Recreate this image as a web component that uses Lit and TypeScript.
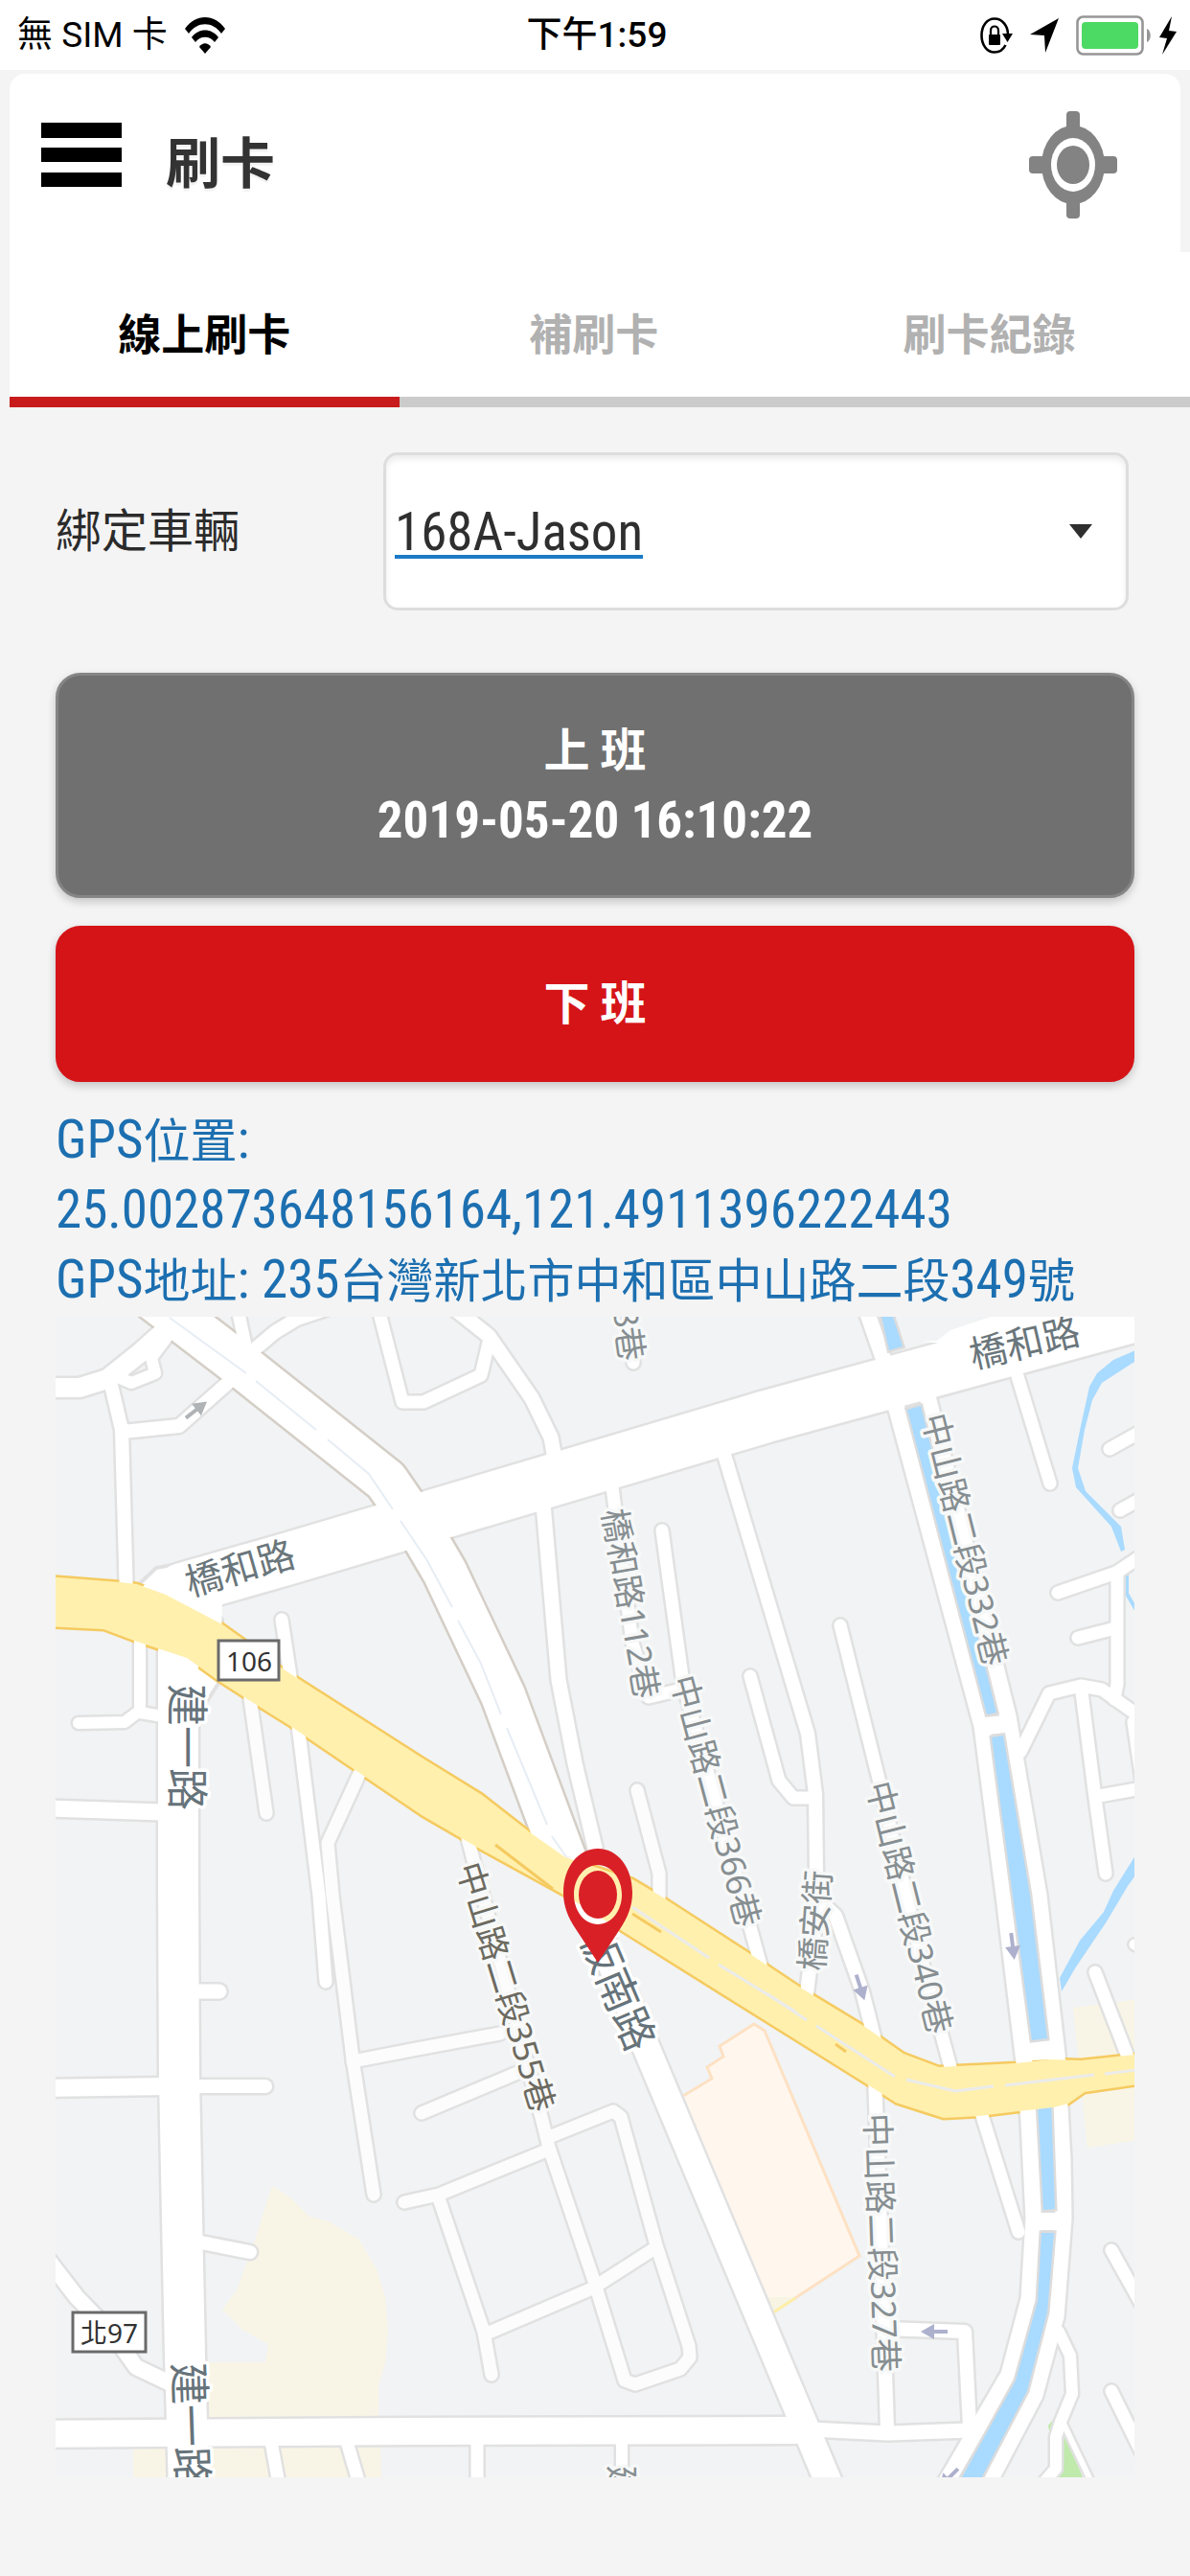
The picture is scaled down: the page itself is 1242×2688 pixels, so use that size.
import { LitElement, html, css, svg } from "lit";
import { customElement, state } from "lit/decorators.js";
import { classMap } from "lit/directives/class-map.js";

type Road = { w: number; p: string; soft?: boolean; dark?: boolean };
type Label = { x: number; y: number; r: number; t: string; k: string };

const ROADS: Road[] = [
  // lanes, north-west
  { w: 20, p: "40,1450 83,1450 112,1441 147,1413 175,1388" },
  { w: 14, p: "115,1443 127,1494 132,1670" },
  { w: 14, p: "128,1496 187,1490 240,1443" },
  { w: 12, p: "123,1439 137,1445 162,1435 158,1419 176,1395" },
  { w: 13, p: "248,1368 257,1410" },
  { w: 14, p: "262,1413 287,1392 310,1378 340,1368" },
  { w: 13, p: "395,1368 420,1465 442,1465 502,1437 510,1403" },
  { w: 15, p: "475,1368 510,1396 555,1461 575,1502 580,1530" },
  { w: 13, p: "655,1366 661,1424" },
  // lanes between the two avenues
  { w: 15, p: "566,1560 583,1755 600,1842 621,1930" },
  { w: 13, p: "638,1546 660,1716 677,1773 711,1765" },
  { w: 13, p: "691,1599 713,1759 760,1930 796,2060" },
  { w: 14, p: "753,1510 843,1811 851,1874 852,1960 852,2000 841,2090" },
  { w: 13, p: "783,1751 813,1860 828,1878 850,1878" },
  { w: 14, p: "855,1985 872,2001 900,2080 914,2135" },
  { w: 14, p: "913,2170 918,2300 926,2537" },
  { w: 13, p: "877,1698 917,1858 965,2060 995,2170" },
  { w: 13, p: "1022,2200 1063,2331" },
  { w: 13, p: "665,1870 688,1957 688,1985", soft: true },
  { w: 13, p: "294,1692 312,1810 333,1980 340,2070" },
  { w: 13, p: "259,1760 278,1894", soft: true },
  { w: 13, p: "381,1840 342,1925 347,1980 368,2150 390,2292", soft: true },
  { w: 13, p: "368,2153 430,2141 522,2124", soft: true },
  { w: 13, p: "440,2207 540,2165", soft: true },
  {
    w: 13,
    p: "488,1920 565,2211 573,2243 620,2382 652,2486 663,2490 710,2474 720,2462 719,2450 685,2345 648,2211 640,2205 573,2232",
    soft: true,
  },
  { w: 13, p: "573,2245 458,2292 422,2300", soft: true },
  { w: 13, p: "458,2296 505,2435 513,2480", soft: true },
  { w: 13, p: "508,2437 618,2390 685,2347", soft: true },
  // west side
  { w: 12, p: "82,1800 130,1799 146,1787 146,1705" },
  { w: 12, p: "146,1789 170,1793" },
  { w: 17, p: "50,1889 170,1893" },
  { w: 15, p: "200,2080 229,2080" },
  { w: 18, p: "50,2181 175,2179" },
  { w: 14, p: "200,2179 277,2179" },
  { w: 14, p: "205,2341 261,2352" },
  { w: 16, p: "50,2360 80,2399 118,2438 142,2472 180,2490" },
  { w: 28, p: "40,2542 430,2539 830,2538" },
  { w: 15, p: "845,2537 927,2541 1012,2538" },
  { w: 13, p: "283,2550 291,2594" },
  { w: 13, p: "362,2550 375,2594" },
  { w: 13, p: "498,2550 498,2594" },
  { w: 12, p: "649,2550 649,2594" },
  { w: 14, p: "925,2432 1007,2435 1012,2535" },
  // east side
  { w: 13, p: "1058,1425 1096,1550" },
  { w: 13, p: "1158,1514 1194,1494" },
  { w: 13, p: "1169,1578 1194,1564" },
  { w: 13, p: "1104,1664 1165,1643 1192,1625" },
  { w: 13, p: "1166,1645 1166,1759 1163,1775" },
  { w: 13, p: "1125,1711 1164,1701" },
  { w: 13, p: "1065,1830 1095,1769 1128,1761 1150,1765 1192,1795" },
  { w: 13, p: "1129,1768 1143,1878 1154,1957" },
  { w: 13, p: "1147,1876 1192,1868" },
  { w: 13, p: "1183,1799 1192,1860" },
  { w: 13, p: "1143,2060 1180,2156" },
  { w: 11, p: "1184,2031 1192,2035" },
  { w: 13, p: "1160,2350 1194,2411" },
  { w: 13, p: "1160,2497 1194,2566" },
  { w: 12, p: "1105,2435 1117,2460 1119,2500 1107,2529 1102,2545 1102,2578 1088,2594" },
  { w: 6, p: "1110,2531 1140,2594" },
  // both banks of the canal and its bridges
  { w: 16, p: "903,1366 922,1420" },
  { w: 17, p: "934,1465 1025,1803 1048,1980 1069,2154 1074,2215 1079,2317 1074,2401 1053,2480 984,2598" },
  { w: 17, p: "967,1455 1052,1793 1084,1980 1103,2145 1109,2256 1110,2317 1102,2419 1080,2501 1031,2594" },
  { w: 18, p: "1028,1803 1050,1801" },
  { w: 20, p: "1072,2142 1100,2141" },
  { w: 18, p: "1083,2320 1105,2320" },
  // avenues
  { w: 42, p: "186,1725 186,1970 187,2170 193,2460 197,2600" },
  { w: 54, p: "190,1660 302,1628 800,1480 1200,1371" },
  { w: 28, p: "600,1960 673,2135 833,2517 868,2600" },
  { w: 46, p: "150,1349 257,1431 403,1547 440,1601 464,1642 525,1771 588,1940", dark: true },
];

const YELLOW_TOP =
  "50,1647 125,1653 143,1655 173,1666 232,1697 253,1712 293,1742 440,1836 503,1875 553,1914 590,1940 660,1963 692,1982 783,2041 837,2077 903,2117 943,2145 980,2159 1060,2155 1097,2151 1128,2152 1194,2145";
const YELLOW_BOTTOM =
  "1194,2176 1132,2185 1115,2197 1100,2201 1063,2205 1022,2210 985,2212 935,2196 910,2180 830,2130 643,2013 590,1980 497,1929 440,1896 303,1803 255,1773 227,1755 195,1732 140,1714 108,1702 50,1699";
const YELLOW = `${YELLOW_TOP} ${YELLOW_BOTTOM}`;

const CANALS = [
  "918,1366 930,1370 942,1407 928,1411",
  "947,1473 961,1469 1040,1789 1030,1791",
  "1035,1815 1047,1813 1075,1980 1093,2129 1077,2131 1057,1980",
  "1083,2195 1097,2195 1101,2307 1089,2308",
  "1087,2332 1100,2332 1093,2415 1072,2497 1019,2598 998,2598 1060,2486 1083,2403",
];

const CREEKS = [
  "1190,1409 1162,1421 1145,1435 1137,1449 1128,1490 1119,1534 1123,1554 1160,1595 1170,1621 1174,1619 1170,1595 1133,1558 1125,1534 1132,1494 1140,1463 1150,1445 1190,1419",
  "1190,1930 1162,1975 1152,1997 1127,2027 1106,2066 1108,2080 1122,2056 1155,2007 1177,1970 1190,1952",
];

const CENTER_BLUE = [
  "177,1377 257,1435",
  "267,1443 330,1494",
  "342,1504 385,1540 410,1577",
  "418,1589 445,1629 472,1679",
  "478,1693 502,1738 523,1791",
  "529,1805 571,1906",
  "576,1918 603,1957",
];

const CENTER_YELLOW = [
  "660,1992 740,2045",
  "750,2052 830,2101",
  "800,2082 842,2110",
  "852,2116 934,2169",
  "946,2172 997,2184 1037,2179",
  "1049,2178 1142,2167",
  "1153,2166 1194,2161",
];

const ORANGE = ["517,1927 577,1973", "660,1999 690,2018", "872,2135 883,2143"];

const ARROWS = [
  { x: 205, y: 1473, r: -38, c: "#b0b3b5" },
  { x: 898, y: 2076, r: 72, c: "#aeb1cd" },
  { x: 1057, y: 2033, r: 83, c: "#aeb1cd" },
  { x: 975, y: 2435, r: 180, c: "#aeb1cd" },
  { x: 990, y: 2588, r: 135, c: "#aeb1cd" },
];

const LABELS: Label[] = [
  { x: 250, y: 1637, r: -16, t: "橋和路", k: "major" },
  { x: 1069, y: 1402, r: -13, t: "橋和路", k: "major" },
  { x: 196, y: 1825, r: 90, t: "建一路", k: "wide" },
  { x: 200, y: 2533, r: 88, t: "建一路", k: "wide" },
  { x: 646, y: 2078, r: 67, t: "板南路", k: "wide" },
  { x: 657, y: 1394, r: 82, t: "8巷", k: "minor" },
  { x: 659, y: 1675, r: 80, t: "橋和路112巷", k: "minor" },
  { x: 748, y: 1881, r: 75, t: "中山路二段366巷", k: "minor" },
  { x: 1008, y: 1608, r: 76, t: "中山路二段332巷", k: "minor" },
  { x: 950, y: 1992, r: 76, t: "中山路二段340巷", k: "minor" },
  { x: 529, y: 2075, r: 73, t: "中山路二段355巷", k: "minor dark" },
  { x: 921, y: 2342, r: 88, t: "中山路二段327巷", k: "minor" },
  { x: 850, y: 2006, r: -86, t: "橋安街", k: "minor" },
  { x: 649, y: 2592, r: 90, t: "建", k: "minor" },
];

@customElement("street-map")
class StreetMap extends LitElement {
  static styles = css`
    :host {
      display: block;
    }
    .map {
      display: block;
      width: 100%;
      height: auto;
      overflow: hidden;
      background: #f1f3f4;
    }
    .line {
      fill: none;
      stroke-linejoin: round;
      stroke-linecap: round;
    }
    .flat {
      fill: none;
      stroke-linejoin: round;
    }
    .label {
      font-family: "Noto Sans", "Noto Sans CJK TC", sans-serif;
      text-anchor: middle;
      dominant-baseline: central;
      paint-order: stroke;
      stroke: #f7f8f8;
      stroke-width: 7px;
      stroke-linejoin: round;
      fill: #868e91;
      font-size: 35px;
    }
    .major {
      font-size: 39px;
      fill: #6a767b;
      stroke: #ffffff;
    }
    .wide {
      font-size: 44px;
      fill: #66737a;
      stroke: #ffffff;
    }
    .dark {
      fill: #6c6a60;
    }
    .shield {
      fill: #ffffff;
      stroke: #6b6a6b;
      stroke-width: 3px;
    }
    .shield-text {
      font: 28px "Noto Sans", "Noto Sans CJK TC", sans-serif;
      text-anchor: middle;
      dominant-baseline: central;
      fill: #333333;
    }
  `;

  render() {
    return html`
      <svg class="map" viewBox="58 1376 1126 1211" role="img" aria-label="地圖">
        <polygon fill="#f9f5e6" points="284,2283 303,2295 323,2315 343,2320 375,2339 393,2370 402,2399 405,2435 402,2468 395,2492 395,2530 210,2530 210,2467 277,2467 280,2448 253,2433 232,2412 247,2392 267,2337" />
        <polygon fill="#f9f5e6" points="139,2550 397,2550 398,2590 139,2590" />
        <polygon fill="#f9f5e6" points="1120,2097 1190,2088 1190,2235 1135,2243" />
        <polygon fill="#fff6ee" stroke="#fde1c3" stroke-width="3" points="708,2192 743,2171 738,2159 755,2148 751,2137 787,2114 798,2121 897,2356 804,2417" />
        <path d="M796,2399 L804,2417 L830,2399 Z" fill="#f7f4e3" />
        <path d="M796,2399 L804,2417 L830,2400" fill="none" stroke="#fdeea9" stroke-width="3" />
        <polygon fill="#bfeaab" points="1108,2530 1131,2590 1104,2590" />
        <polygon fill="#bfeaab" points="1094,2533 1100,2526 1099,2560" />
        ${CREEKS.map((p) => svg`<polygon fill="#a9daff" points=${p} />`)}
        <polyline class="flat" stroke="#a9daff" stroke-width="4" points="1176,1645 1176,1665 1186,1682" />

        ${ROADS.map(
          (r) => svg`<polyline class="line" stroke=${r.dark ? "#d4cec6" : "#e1e1e1"} stroke-width=${r.w + 5} points=${r.p} />`
        )}
        <polygon fill="#ffffff" stroke="#e1e1e1" stroke-width="4" points="143,1657 163,1638 190,1633 232,1692 232,1710" />
        <polygon fill="#ffffff" stroke="#e1e1e1" stroke-width="4" points="200,1735 229,1757 215,1779 210,1799 200,1799" />
        <polygon class="line" stroke="#f5ca60" stroke-width="5" points=${YELLOW} />
        ${ROADS.map(
          (r) => svg`<polyline class="line" stroke=${r.soft ? "#fcfcfc" : "#ffffff"} stroke-width=${r.w} points=${r.p} />`
        )}
        <polygon fill="#ffffff" points="145,1662 164,1641 190,1635 232,1670 231,1710" />
        <polygon fill="#ffffff" points="960,1402 978,1401 992,1390 1034,1376 1080,1376 1080,1410" />
        ${CENTER_BLUE.map((p) => svg`<polyline class="flat" stroke="#e7edf4" stroke-width="2" points=${p} />`)}
        ${CANALS.map((p) => svg`<polygon fill="#a9daff" stroke="#dcdcdc" stroke-width="5" paint-order="stroke" points=${p} />`)}
        <polygon fill="#fff0ae" points=${YELLOW} />
        ${CENTER_YELLOW.map((p) => svg`<polyline class="flat" stroke="#ebebea" stroke-width="3" points=${p} />`)}
        ${ORANGE.map((p) => svg`<polyline class="flat" stroke="#f5ca60" stroke-width="3" points=${p} />`)}
        ${ARROWS.map(
          (a) => svg`<path transform="translate(${a.x} ${a.y}) rotate(${a.r})" fill=${a.c} d="M-14,-2 H0 V-8 L14,0 L0,8 V2 H-14 Z" />`
        )}
        ${LABELS.map(
          (l) => svg`<text class="label ${l.k}" transform="translate(${l.x} ${l.y}) rotate(${l.r})">${l.t}</text>`
        )}
        <rect class="shield" x="228" y="1714" width="63" height="41" />
        <text class="shield-text" x="260" y="1735">106</text>
        <rect class="shield" x="76" y="2415" width="76" height="41" />
        <text class="shield-text" x="114" y="2436">北97</text>

        <path
          fill="#d92027"
          fill-rule="evenodd"
          d="M624,1931 C645,1931 660,1951 660,1977 C660,1991 655,2003 647,2015 L624,2050 L601,2015 C593,2003 588,1991 588,1977 C588,1951 603,1931 624,1931 Z
             M624,1948 C610,1948 599,1962 599,1979 C599,1996 610,2010 624,2010 C638,2010 649,1996 649,1979 C649,1962 638,1948 624,1948 Z"
        />
        <ellipse cx="624" cy="1979" rx="20" ry="25" fill="#d92027" />
      </svg>
    `;
  }
}

@customElement("status-bar")
class StatusBar extends LitElement {
  static styles = css`
    :host {
      display: grid;
      grid-template-columns: 1fr auto 1fr;
      align-items: center;
      height: 73px;
      padding: 0 14px 0 18px;
      background: #ffffff;
      color: #000000;
      font-family: Roboto, "Noto Sans CJK TC", sans-serif;
      font-size: 37px;
      line-height: 40px;
    }
    .side {
      display: flex;
      align-items: center;
      gap: 18px;
    }
    .end {
      justify-content: flex-end;
    }
    .time {
      font-weight: 500;
    }
    svg {
      display: block;
    }
    .power {
      display: flex;
      align-items: center;
      gap: 8px;
    }
  `;

  render() {
    return html`
      <div class="side">
        <span>無 SIM 卡</span>
        <svg width="42" height="38" viewBox="0 0 42 38" aria-hidden="true">
          <path d="M0,12 C11,-4 31,-4 42,12 L38,17 C29,4 13,4 4,17 Z" />
          <path d="M7,21 C14,11 28,11 35,21 L31,26 C26,19 16,19 11,26 Z" />
          <path d="M15,31 C18,26 24,26 27,31 L21,38 Z" />
        </svg>
      </div>
      <span class="time">下午1:59</span>
      <div class="side end">
        <svg width="34" height="38" viewBox="0 0 34 38" aria-hidden="true">
          <path d="M29,18 C29,9 23,1.500 15,1.500 C7,1.500 1.500,9 1.500,19 C1.500,29 7,36.500 15,36.500 C20,36.500 24,34 26.500,29" fill="none" stroke="#000" stroke-width="2.600" />
          <path d="M23,17 H34 L28.500,26 Z" />
          <rect x="9" y="18" width="12" height="11" rx="1" />
          <path d="M11,18 V14 C11,8 19,8 19,14 V18" fill="none" stroke="#000" stroke-width="2.200" />
        </svg>
        <svg width="30" height="36" viewBox="0 0 30 36" aria-hidden="true">
          <path d="M30,0 L16,36 L15,18 L0,17 Z" />
        </svg>
        <div class="power">
          <svg width="79" height="42" viewBox="0 0 79 42" aria-hidden="true">
            <rect x="1.500" y="1.500" width="68" height="39" rx="6" fill="none" stroke="#969696" stroke-width="2.600" />
            <rect x="6" y="7" width="59" height="28" rx="4" fill="#4cd964" />
            <path d="M74,14 C79,16 79,26 74,28 Z" fill="#969696" />
          </svg>
          <svg width="18" height="40" viewBox="0 0 18 40" aria-hidden="true">
            <path d="M13,0 L0,22 L8,23 L3,40 L18,16 L10,15 Z" />
          </svg>
        </div>
      </div>
    `;
  }
}

@customElement("app-root")
class AppRoot extends LitElement {
  @state() private tab = 0;

  static styles = css`
    :host {
      display: block;
      min-height: 100vh;
      background: #f4f4f4;
      color: #2b2b2b;
      font-family: "Roboto Condensed", "Liberation Sans", "Noto Sans CJK TC", sans-serif;
    }
    .header {
      display: flex;
      align-items: center;
      margin: 4px 10px 0;
      height: 186px;
      padding: 4px 66px 0 33px;
      box-sizing: border-box;
      background: #ffffff;
      border-radius: 16px 16px 0 0;
    }
    .icon-button {
      display: block;
      padding: 0;
      border: 0;
      background: none;
    }
    .icon-button svg {
      display: block;
    }
    .menu {
      padding-bottom: 22px;
    }
    .title {
      flex: 1;
      margin: 0 0 0 46px;
      font-size: 57px;
      line-height: 84px;
      font-weight: 700;
      color: #333333;
      text-shadow: 0 3px 0 #f3f3f3;
    }
    .tabs {
      display: grid;
      grid-template-columns: 33fr 33fr 34fr;
      margin-left: 10px;
      background: #ffffff;
    }
    .tab {
      height: 162px;
      padding: 16px 0 0;
      border: 0;
      border-bottom: 11px solid #cbcbcb;
      background: none;
      font: 700 45px/64px "Noto Sans CJK TC", sans-serif;
      color: #b1b1b1;
    }
    .tab.active {
      color: #000000;
      border-bottom-color: #c81b1b;
    }
    .content {
      padding: 47px 58px 100px;
    }
    .field {
      display: grid;
      grid-template-columns: 342px 1fr;
      align-items: center;
      padding-right: 6px;
    }
    .field-label {
      font-size: 48px;
      line-height: 72px;
    }
    .select-wrap {
      display: grid;
      align-items: center;
    }
    .select-wrap > * {
      grid-area: 1 / 1;
    }
    .select {
      width: 100%;
      height: 165px;
      box-sizing: border-box;
      appearance: none;
      padding: 0 60px 0 9px;
      border: 3px solid #dddddd;
      border-radius: 15px;
      background: #ffffff;
      box-shadow: inset 0 4px 6px #ececec;
      color: #2f2f2f;
      font: 55px/80px "Roboto Condensed", "Liberation Sans", sans-serif;
      text-decoration: underline 4px #1b7ac6;
      text-underline-offset: 5px;
    }
    .caret {
      justify-self: end;
      margin-right: 38px;
      pointer-events: none;
    }
    .actions {
      display: grid;
      gap: 29px;
      margin-top: 65px;
    }
    .punch {
      display: flex;
      flex-direction: column;
      align-items: center;
      justify-content: center;
      height: 163px;
      border: 3px solid #d51418;
      border-radius: 26px;
      background: #d51418;
      box-shadow: 0 4px 10px rgba(0, 0, 0, 0.2);
      color: #ffffff;
      font: 700 48px/73px "Roboto Condensed", "Liberation Sans", "Noto Sans CJK TC", sans-serif;
    }
    .punch.done {
      height: 235px;
      border-color: #858585;
      background: #707070;
    }
    .stamp {
      font-size: 53px;
    }
    .gps {
      margin: 26px 0 0;
      font-size: 49px;
      line-height: 73px;
      color: #1c6fb0;
    }
    .row {
      display: block;
    }
    .num {
      font-size: 55px;
      line-height: 55px;
    }
  `;

  private readonly tabs = ["線上刷卡", "補刷卡", "刷卡紀錄"];

  render() {
    return html`
      <status-bar></status-bar>
      <header class="header">
        <button class="icon-button menu" aria-label="選單">
          <svg width="84" height="67" viewBox="0 0 84 67" aria-hidden="true">
            <rect width="84" height="16" />
            <rect y="26" width="84" height="15" />
            <rect y="52" width="84" height="15" />
          </svg>
        </button>
        <h1 class="title">刷卡</h1>
        <button class="icon-button" aria-label="定位">
          <svg width="92" height="112" viewBox="0 0 92 112" aria-hidden="true">
            <g fill="#838383">
              <rect x="39" y="0" width="14" height="112" rx="4" />
              <rect x="0" y="47" width="92" height="18" rx="4" />
              <ellipse cx="46" cy="56" rx="33" ry="41" />
            </g>
            <ellipse cx="46" cy="56" rx="23" ry="28" fill="#fff" />
            <ellipse cx="46" cy="56" rx="17" ry="20" fill="#838383" />
          </svg>
        </button>
      </header>
      <nav class="tabs" role="tablist">
        ${this.tabs.map(
          (name, i) => html`<button
            role="tab"
            class=${classMap({ tab: true, active: i === this.tab })}
            aria-selected=${i === this.tab ? "true" : "false"}
            @click=${() => (this.tab = i)}
          >${name}</button>`
        )}
      </nav>
      <main class="content">
        <div class="field">
          <label class="field-label" for="vehicle">綁定車輛</label>
          <div class="select-wrap">
            <select class="select" id="vehicle">
              <option>168A-Jason</option>
            </select>
            <svg class="caret" width="24" height="15" viewBox="0 0 24 15" aria-hidden="true">
              <path d="M0,0 H24 L12,15 Z" fill="#2f2f2f" />
            </svg>
          </div>
        </div>
        <div class="actions">
          <button class="punch done"><span>上 班</span><span class="stamp">2019-05-20 16:10:22</span></button>
          <button class="punch"><span>下 班</span></button>
        </div>
        <p class="gps">
          <span class="row"><span class="num">GPS</span>位置<span class="num">:</span></span>
          <span class="row"><span class="num">25.002873648156164,121.4911396222443</span></span>
          <span class="row"><span class="num">GPS</span>地址<span class="num">: 235</span>台灣新北市中和區中山路二段<span class="num">349</span>號</span>
        </p>
        <street-map></street-map>
      </main>
    `;
  }
}
